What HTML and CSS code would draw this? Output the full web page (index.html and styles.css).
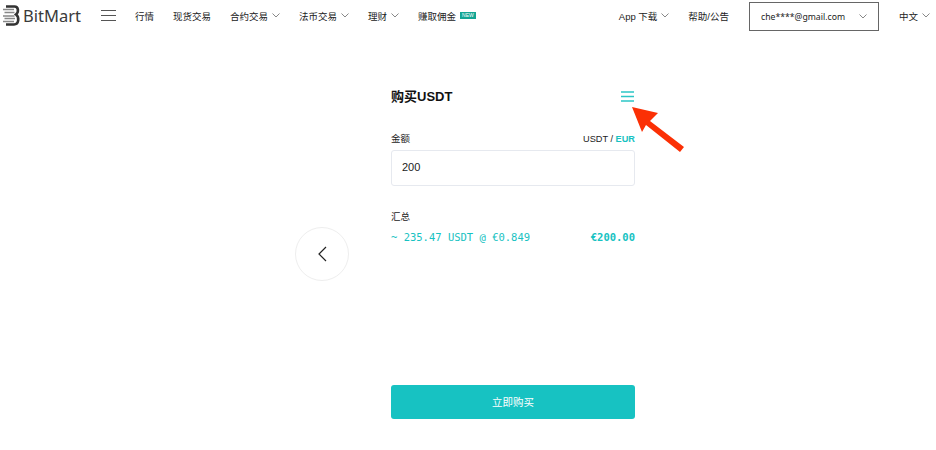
FILE: index.html
```html
<!DOCTYPE html>
<html lang="zh">
<head>
  <meta charset="UTF-8">
  <meta name="viewport" content="width=device-width, initial-scale=1.0">
  <title>购买USDT</title>
  <link rel="stylesheet" href="styles.css">
</head>
<body>
  <header class="topbar">
    <a class="logo">
      <svg width="18" height="21" viewBox="0 0 18 21">
        <path d="M3 1.500h8.500c4 0 4.500 5.500 1.500 8 3.500 2.500 3 10-2 10H3" fill="none" stroke="#333" stroke-width="2.600"/>
        <path d="M0 4.500h11M1.500 7.500h10M0 11h11.500M1.500 13.500h10.500M0 16.500h11" stroke="#888" stroke-width="1.700"/>
      </svg>
      <span>BitMart</span>
    </a>
    <svg class="burger" width="15" height="11" viewBox="0 0 15 11">
      <path d="M0 .5h15M0 5.500h15M0 10.500h15" stroke="#555" stroke-width="1"/>
    </svg>
    <nav class="nav">
      <a>行情</a>
      <a>现货交易</a>
      <a>合约交易<svg class="caret" viewBox="0 0 8 5"><path d="M.5.500 4 4 7.500.500"/></svg></a>
      <a>法币交易<svg class="caret" viewBox="0 0 8 5"><path d="M.5.500 4 4 7.500.500"/></svg></a>
      <a>理财<svg class="caret" viewBox="0 0 8 5"><path d="M.5.500 4 4 7.500.500"/></svg></a>
      <a>赚取佣金<span class="new">NEW</span></a>
    </nav>
    <div class="right">
      <a>App 下载<svg class="caret" viewBox="0 0 8 5"><path d="M.5.500 4 4 7.500.500"/></svg></a>
      <a>帮助/公告</a>
      <div class="account">
        <span>che****@gmail.com</span>
        <svg class="caret" viewBox="0 0 8 5"><path d="M.5.500 4 4 7.500.500"/></svg>
      </div>
      <a class="lang">中文<svg class="caret" viewBox="0 0 8 5"><path d="M.5.500 4 4 7.500.500"/></svg></a>
    </div>
  </header>

  <main class="page">
    <button class="back">
      <svg width="10" height="16" viewBox="0 0 10 16"><path d="M9 1 2 8l7 7" fill="none" stroke="#222" stroke-width="1.200"/></svg>
    </button>
    <section class="panel">
      <div class="panel-head">
        <h1>购买USDT</h1>
        <svg class="menu" width="13" height="11" viewBox="0 0 13 11">
          <path d="M0 1h13M0 5.500h13M0 10h13" stroke="#2cc6c6" stroke-width="1.400"/>
        </svg>
      </div>
      <div class="row label-row">
        <label>金额</label>
        <span class="unit">USDT / <b>EUR</b></span>
      </div>
      <input class="amount" type="text" value="200">
      <div class="summary-title">汇总</div>
      <div class="row summary">
        <span>~ 235.47 USDT @ €0.849</span>
        <b>€200.00</b>
      </div>
      <button class="buy">立即购买</button>
    </section>
    <svg class="arrow" width="58" height="50" viewBox="0 0 58 50">
      <path d="M2 2 28 8 20 16 54 42 50 47 16 20 12 27Z" fill="#fb3005"/>
    </svg>
  </main>
</body>
</html>
```

FILE: styles.css
```css
body {
  margin: 0;
  background: #fff;
  color: #222;
  font-family: "Liberation Sans", "Noto Sans CJK SC", sans-serif;
  font-size: 9.500px;
}
.topbar {
  display: flex;
  align-items: center;
  height: 31px;
  padding: 0 0 0 3px;
}
.logo {
  display: flex;
  align-items: center;
  gap: 2px;
  width: 98px;
  font-family: "Noto Sans", sans-serif;
  font-size: 16.500px;
  color: #3a3a3a;
}
.burger {
  margin-right: 19px;
}
.nav {
  display: flex;
  gap: 19px;
}
.nav a, .right a {
  display: flex;
  align-items: center;
  white-space: nowrap;
}
.caret {
  width: 8px;
  height: 5px;
  margin-left: 4px;
  fill: none;
  stroke: #555;
  stroke-width: .7;
}
.new {
  margin-left: 4px;
  padding: 0 2px;
  background: #12a594;
  color: #fff;
  font-size: 5px;
  line-height: 7px;
}
.right {
  display: flex;
  align-items: center;
  margin-left: auto;
}
.right > a:first-child {
  margin-right: 19px;
}
.right > a:nth-child(2) {
  margin-right: 20px;
}
.account {
  display: flex;
  justify-content: space-between;
  align-items: center;
  box-sizing: border-box;
  width: 130px;
  height: 29px;
  margin-top: 2px;
  padding: 0 11px;
  border: 1px solid #666;
  font-family: "Noto Sans", sans-serif;
  font-size: 8.700px;
}
.lang {
  margin: 0 6px 0 20px;
}
.page {
  position: relative;
  display: flex;
  gap: 42px;
  padding: 45px 0 0 295px;
}
.back {
  width: 54px;
  height: 54px;
  margin-top: 151px;
  padding: 0;
  background: #fff;
  border: 1px solid #eee;
  border-radius: 50%;
}
.back svg {
  display: block;
  margin: auto;
}
.panel {
  width: 244px;
}
.panel-head {
  display: flex;
  justify-content: space-between;
  align-items: center;
  height: 38px;
  padding-right: 1px;
}
h1 {
  margin: 0;
  font-size: 13px;
  color: #111;
}
.menu {
  margin-top: 3px;
}
.row {
  display: flex;
  justify-content: space-between;
}
.label-row {
  margin-top: 17px;
  line-height: 16px;
}
.unit {
  font-size: 9.200px;
}
.unit b {
  color: #17c2c2;
}
.amount {
  display: block;
  box-sizing: border-box;
  width: 100%;
  height: 36px;
  margin-top: 3px;
  padding: 0 10px 2px;
  border: 1px solid #e6e9ef;
  border-radius: 3px;
  font: 11px "Liberation Sans", sans-serif;
  color: #222;
}
.summary-title {
  margin-top: 23px;
  line-height: 16px;
}
.summary {
  margin-top: 4px;
  line-height: 16px;
  color: #17c2c2;
  font-family: "DejaVu Sans Mono", monospace;
  font-size: 10.500px;
}
.buy {
  display: block;
  width: 100%;
  height: 34px;
  margin-top: 140px;
  padding-bottom: 2px;
  background: #17c2c2;
  border: 0;
  border-radius: 3px;
  color: #fff;
  font: 10.500px "Liberation Sans", "Noto Sans CJK SC", sans-serif;
}
.arrow {
  position: absolute;
  left: 630px;
  top: 74px;
}
```
